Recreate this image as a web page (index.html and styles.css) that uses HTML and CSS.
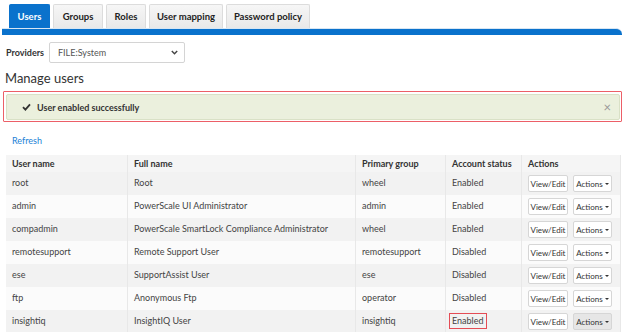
FILE: index.html
```html
<!DOCTYPE html>
<html lang="en">
    <head>
        <meta charset="UTF-8">
        <title>Users</title>
        <link rel="stylesheet" href="styles.css">
    </head>
    <body>
        <div class="tabs">
            <div class="tab active t1">Users</div>
            <div class="tab t2">Groups</div>
            <div class="tab t3">Roles</div>
            <div class="tab t4">User mapping</div>
            <div class="tab t5">Password policy</div>
        </div>
        <div class="tabbar"></div>

        <div class="providers">
            <span class="label">Providers</span>
            <div class="select">
                <span>FILE:System</span>
                <svg width="7" height="5" viewBox="0 0 7 5"><path d="M0.8 1 L3.5 3.8 L6.2 1" fill="none" stroke="#444" stroke-width="1.4"/></svg>
            </div>
        </div>

        <h1 class="title">Manage users</h1>

        <div class="highlight">
            <div class="alert">
                <svg class="check" width="9" height="8" viewBox="0 0 9 8"><path d="M1 4.2 L3.4 6.6 L8 1.4" fill="none" stroke="#333" stroke-width="1.8"/></svg>
                <span>User enabled successfully</span>
                <span class="close">&times;</span>
            </div>
        </div>

        <a class="refresh" href="#">Refresh</a>

        <table class="users">
            <thead>
                <tr>
                    <th class="c1">User name</th>
                    <th class="c2">Full name</th>
                    <th class="c3">Primary group</th>
                    <th class="c4">Account status</th>
                    <th class="c5">Actions</th>
                </tr>
            </thead>
            <tbody>
                <tr>
                    <td>root</td><td>Root</td><td>wheel</td><td>Enabled</td>
                    <td><span class="btn">View/Edit</span><span class="btn">Actions <i class="caret"></i></span></td>
                </tr>
                <tr>
                    <td>admin</td><td>PowerScale UI Administrator</td><td>admin</td><td>Enabled</td>
                    <td><span class="btn">View/Edit</span><span class="btn">Actions <i class="caret"></i></span></td>
                </tr>
                <tr>
                    <td>compadmin</td><td>PowerScale SmartLock Compliance Administrator</td><td>wheel</td><td>Enabled</td>
                    <td><span class="btn">View/Edit</span><span class="btn">Actions <i class="caret"></i></span></td>
                </tr>
                <tr>
                    <td>remotesupport</td><td>Remote Support User</td><td>remotesupport</td><td>Disabled</td>
                    <td><span class="btn">View/Edit</span><span class="btn">Actions <i class="caret"></i></span></td>
                </tr>
                <tr>
                    <td>ese</td><td>SupportAssist User</td><td>ese</td><td>Disabled</td>
                    <td><span class="btn">View/Edit</span><span class="btn">Actions <i class="caret"></i></span></td>
                </tr>
                <tr>
                    <td>ftp</td><td>Anonymous Ftp</td><td>operator</td><td>Disabled</td>
                    <td><span class="btn">View/Edit</span><span class="btn">Actions <i class="caret"></i></span></td>
                </tr>
                <tr>
                    <td>insightiq</td><td>InsightIQ User</td><td>insightiq</td><td><span class="marked">Enabled</span></td>
                    <td><span class="btn">View/Edit</span><span class="btn pressed">Actions <i class="caret"></i></span></td>
                </tr>
            </tbody>
        </table>
    </body>
</html>
```

FILE: styles.css
```css
body {
    margin: 0;
    width: 624px;
    height: 332px;
    overflow: hidden;
    font-family: Lato, "Open Sans", sans-serif;
    font-size: 9px;
    color: #333;
    background: #fff;
}

.tabs {
    display: flex;
    gap: 3px;
    padding: 4px 0 0 9px;
    height: 24px;
}

.tab {
    display: flex;
    align-items: center;
    justify-content: center;
    box-sizing: border-box;
    border: 1px solid #dcdcdc;
    border-bottom: none;
    border-radius: 2px 2px 0 0;
    background: linear-gradient(#f6f6f6, #e9e9e9);
    font-weight: bold;
    font-size: 9.5px;
    color: #222;
}

.t1 { width: 41px; }
.t2 { width: 50px; }
.t3 { width: 40px; }
.t4 { width: 74px; }
.t5 { width: 84px; }

.tab.active {
    background: #0a72cc;
    border-color: #0a72cc;
    color: #fff;
}

.tabbar {
    height: 6px;
    margin: 0 2px;
    background: #0a72cc;
    border-top-right-radius: 6px;
    border-top: 1px solid #d8e6f3;
}

.providers {
    display: flex;
    align-items: center;
    padding: 7px 0 0 6px;
}

.label {
    width: 43px;
    font-weight: bold;
    color: #333;
}

.select {
    width: 136px;
    height: 21px;
    box-sizing: border-box;
    border: 1px solid #d4d4d4;
    border-radius: 2px;
    display: flex;
    align-items: center;
    justify-content: space-between;
    padding: 0 6px 0 8px;
    color: #555;
}

.title {
    margin: 5px 0 0 5px;
    font-size: 13px;
    font-weight: normal;
    color: #333;
    height: 20px;
    line-height: 20px;
}

.highlight {
    margin: 3px 2px 0 3px;
    border: 1px solid #ec5f67;
    border-radius: 1px;
    padding: 2px 1px 1px 2px;
}

.alert {
    display: flex;
    align-items: center;
    height: 26px;
    box-sizing: border-box;
    padding: 0 8px 0 15px;
    background: #ebf0dd;
    border: 1px solid #d9e1c6;
    border-radius: 2px;
    font-weight: bold;
    color: #333;
}

.check {
    margin-right: 6px;
}

.close {
    margin-left: auto;
    font-size: 13px;
    font-weight: normal;
    color: #999;
}

.refresh {
    display: block;
    margin: 13px 0 0 12px;
    height: 14px;
    color: #1b7fd6;
    text-decoration: none;
}

.users {
    margin: 6px 0 0 5px;
    width: 616px;
    border-collapse: collapse;
    table-layout: fixed;
}

.users th,
.users td {
    text-align: left;
    padding: 0 6px;
    border-left: 1px solid #fff;
    border-right: 1px solid #e8e8e8;
    vertical-align: middle;
    white-space: nowrap;
    overflow: hidden;
}

.users th {
    height: 17px;
    background: #f5f5f5;
    font-weight: bold;
    color: #333;
}

.users td {
    height: 21px;
    color: #444;
    padding-bottom: 2px;
}

.users tbody tr:nth-child(odd) {
    background: #f2f2f2;
}

.users tbody tr:nth-child(even) {
    background: #fbfbfb;
}

.c1 { width: 109px; }
.c2 { width: 215px; }
.c3 { width: 77px; }
.c4 { width: 63px; }

.users td:last-child {
    padding: 0 0 0 6px;
}

.btn {
    display: inline-flex;
    align-items: center;
    justify-content: center;
    height: 17px;
    box-sizing: border-box;
    border: 1px solid #d6d6d6;
    border-radius: 2px;
    background: #fff;
    font-size: 8px;
    color: #333;
    width: 40px;
    margin-right: 5px;
    vertical-align: middle;
}

.btn + .btn {
    width: 39px;
}

.btn.pressed {
    background: #e6e6e6;
}

.caret {
    display: inline-block;
    margin-left: 2px;
    border-left: 2px solid transparent;
    border-right: 2px solid transparent;
    border-top: 2px solid #333;
}

.marked {
    display: inline-block;
    border: 1px solid #e44c55;
    padding: 0 2px;
    margin-left: -3px;
    line-height: 14px;
}
```
